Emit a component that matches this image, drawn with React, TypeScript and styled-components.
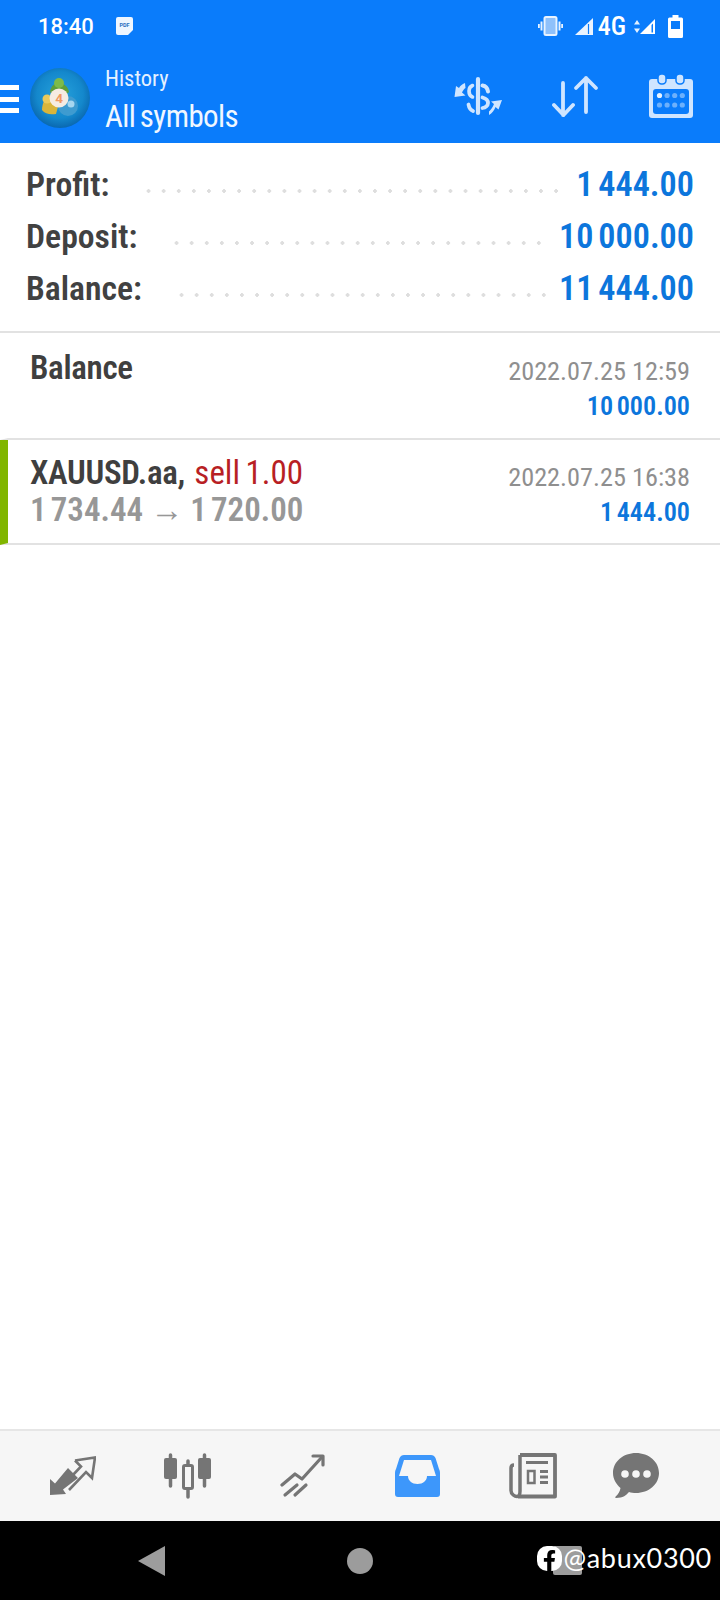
import styled, { createGlobalStyle } from "styled-components";
import { FaFacebookF } from "react-icons/fa";

const GlobalStyle = createGlobalStyle`
  html, body {
    margin: 0;
    padding: 0;
    background: #ffffff;
  }
  body {
    font-family: Roboto, "Liberation Sans", sans-serif;
  }
`;

const Page = styled.div`
  width: 720px;
  height: 1600px;
  display: flex;
  flex-direction: column;
  overflow: hidden;
`;

const Header = styled.header`
  height: 143px;
  background: #0a7cfb;
  color: #fff;
  display: flex;
  flex-direction: column;
`;

const StatusBar = styled.div`
  height: 52px;
  display: flex;
  align-items: center;
  padding: 0 37px 0 38px;
`;

const Clock = styled.span`
  font-size: 22px;
  font-weight: 500;
  margin-right: 22px;
`;

const StatusRight = styled.div`
  margin-left: auto;
  display: flex;
  align-items: center;
`;

const NetLabel = styled.span`
  font-size: 26px;
  line-height: 26px;
  font-weight: 500;
  font-stretch: 75%;
  margin: 0 8px 0 5px;
`;

const Toolbar = styled.div`
  flex: 1;
  display: flex;
  align-items: center;
`;

const Burger = styled.div`
  width: 19px;
  height: 28px;
  margin-top: 3px;
  display: flex;
  flex-direction: column;
  justify-content: space-between;
  span {
    display: block;
    height: 5px;
    background: #fff;
  }
`;

const LogoWrap = styled.div`
  margin: 0 15px 0 11px;
  height: 60px;
`;

const Titles = styled.div`
  display: flex;
  flex-direction: column;
  flex: 1;
  margin-top: 12px;
`;

const Subtitle = styled.span`
  font-size: 22.5px;
  line-height: 27px;
  font-stretch: 75%;
  color: #e4f1ff;
`;

const Title = styled.span`
  font-size: 31px;
  line-height: 50px;
  font-stretch: 75%;
  letter-spacing: -0.6px;
  word-spacing: -2px;
  color: #f0f7ff;
`;

const ToolIcons = styled.div`
  display: flex;
  align-items: center;
  gap: 46px;
  padding: 0 27px 3px 0;
`;

const Summary = styled.section`
  padding: 15px 26px;
  border-bottom: 2px solid #e2e2e2;
  height: 190px;
  box-sizing: border-box;
`;

const SummaryRow = styled.div`
  height: 52px;
  display: flex;
  align-items: center;
  font-weight: 600;
  font-stretch: 75%;
`;

const SummaryLabel = styled.span`
  font-size: 33.7px;
  color: #414141;
`;

const Dots = styled.span`
  flex: 1;
  height: 4px;
  margin: 14px 12px 0 32px;
  background-image: radial-gradient(circle, #dedede 1.7px, transparent 2px);
  background-size: 15.1px 4px;
  background-repeat: repeat-x;
`;

const SummaryValue = styled.span`
  font-size: 34.2px;
  word-spacing: -3px;
  color: #0c76dc;
`;

const DealRow = styled.article<{ $accent?: boolean; $height: number }>`
  height: ${({ $height }) => $height}px;
  box-sizing: border-box;
  border-bottom: 2px solid #e2e2e2;
  border-left: 8px solid ${({ $accent }) => ($accent ? "#80b500" : "transparent")};
  padding: 0 30px 0 22px;
  display: flex;
  justify-content: space-between;
`;

const DealLeft = styled.div<{ $top: number }>`
  display: flex;
  flex-direction: column;
  padding-top: ${({ $top }) => $top}px;
`;

const DealRight = styled.div<{ $top: number }>`
  display: flex;
  flex-direction: column;
  align-items: flex-end;
  padding-top: ${({ $top }) => $top}px;
`;

const DealName = styled.div`
  font-size: 33px;
  line-height: 37px;
  font-weight: 600;
  font-stretch: 75%;
  letter-spacing: -0.3px;
  word-spacing: -2px;
  color: #3f3f3f;
`;

const SellText = styled.span`
  font-weight: 400;
  letter-spacing: 0;
  margin-left: 4px;
  color: #b81f24;
`;

const DealPrices = styled.div`
  font-size: 33px;
  line-height: 37px;
  font-weight: 600;
  font-stretch: 75%;
  word-spacing: -3.5px;
  color: #979797;
`;

const PriceArrow = styled.span`
  margin: 0 3px;
`;

const DealTime = styled.div`
  font-size: 26.3px;
  line-height: 37px;
  font-stretch: 75%;
  color: #8f8f8f;
`;

const DealProfit = styled.div`
  font-size: 26.2px;
  line-height: 33px;
  font-weight: 600;
  font-stretch: 75%;
  word-spacing: -2.5px;
  color: #0c76dc;
`;

const Spacer = styled.div`
  flex: 1;
`;

const BottomNav = styled.nav`
  height: 92px;
  box-sizing: border-box;
  border-top: 2px solid #e6e6e6;
  background: #f6f6f6;
  display: grid;
  grid-template-columns: repeat(5, 115px) 91px;
  padding-left: 15px;
  align-items: center;
  justify-items: center;
`;

const SystemBar = styled.div`
  height: 79px;
  background: #000;
  position: relative;
  display: flex;
  align-items: center;
  gap: 182px;
  padding-left: 138px;
`;

const Watermark = styled.div`
  position: absolute;
  right: 8px;
  top: 22px;
  display: flex;
  align-items: center;
  gap: 1px;
  color: #fff;
  font-family: Lato, sans-serif;
  font-size: 27px;
  line-height: 30px;
  letter-spacing: 0.7px;
`;

const navGrey = "#757575";
const toolBlue = "#cfe5ff";

function Logo() {
  return (
    <svg width="60" height="60" viewBox="0 0 60 60">
      <defs>
        <radialGradient id="lg" cx="50%" cy="45%" r="55%">
          <stop offset="0%" stopColor="#27a2dc" />
          <stop offset="70%" stopColor="#1488cc" />
          <stop offset="100%" stopColor="#0a68b0" />
        </radialGradient>
      </defs>
      <circle cx="30" cy="30" r="30" fill="url(#lg)" />
      <path d="M20 24c1-7 5-9 9-9s9 3 10 9l-10 8z" fill="#5f9f3a" />
      <circle cx="29" cy="15" r="5" fill="#7dbb49" />
      <path d="M12 42c0-7 3-12 8-13l9 6-3 11c-6 1-11 0-14-4z" fill="#d9b53a" />
      <circle cx="17" cy="31" r="4.500" fill="#e9c95a" />
      <circle cx="38" cy="38" r="10" fill="#3e9bd0" />
      <circle cx="41" cy="36" r="3.500" fill="#a6d6ef" />
      <circle cx="29" cy="30" r="9.500" fill="#f6ece2" />
      <text x="29" y="35" fontSize="13.500" fontWeight="700" textAnchor="middle" fill="#f09a62" fontFamily="Roboto">4</text>
    </svg>
  );
}

function PdfBadge() {
  return (
    <svg width="17" height="18" viewBox="0 0 17 18">
      <path d="M2 0h13a2 2 0 0 1 2 2v11l-5 5H2a2 2 0 0 1-2-2V2a2 2 0 0 1 2-2z" fill="#eef6ff" />
      <text x="8.500" y="9.500" fontSize="5.500" fontWeight="700" textAnchor="middle" fill="#2b6fc0" fontFamily="Roboto">PDF</text>
    </svg>
  );
}

function VibrateIcon() {
  return (
    <svg width="25" height="20" viewBox="0 0 25 20">
      <rect x="6.500" y="1" width="12" height="18" rx="1.500" fill="#8fc1fb" stroke="#e8f3ff" strokeWidth="2" />
      <path d="M3.500 5.500v9M0.800 8v4M21.500 5.500v9M24.200 8v4" stroke="#e8f3ff" strokeWidth="2" />
    </svg>
  );
}

function SignalIcon() {
  return (
    <svg width="18" height="17" viewBox="0 0 18 17">
      <path d="M0 17L18 0v17z" fill="#eaf4ff" />
      <path d="M13.500 6v10" stroke="#0a7cfb" strokeWidth="1.200" />
    </svg>
  );
}

function SmallSignalIcon() {
  return (
    <svg width="15" height="15" viewBox="0 0 15 15">
      <path d="M0 15L15 0v15z" fill="#fff" />
      <path d="M11.500 6l1.500-1.500v9h-1.500z" fill="#0a7cfb" />
    </svg>
  );
}

function DataArrows() {
  return (
    <svg width="6" height="13" viewBox="0 0 6 13">
      <path d="M3 0l3 4.500H0zM3 13L0 8.500h6z" fill="#e4f1ff" />
    </svg>
  );
}

const BatteryWrap = styled.span`
  display: flex;
  margin-left: 13px;
`;

function BatteryIcon() {
  return (
    <BatteryWrap>
      <svg width="15" height="23" viewBox="0 0 15 23">
        <path d="M4.500 0h6v2.500h3A1.500 1.500 0 0 1 15 4v17.500a1.500 1.500 0 0 1-1.500 1.500h-12A1.500 1.500 0 0 1 0 21.500V4a1.500 1.500 0 0 1 1.500-1.500h3z" fill="#fff" />
        <rect x="3" y="6" width="9" height="8" fill="#0a7cfb" />
      </svg>
    </BatteryWrap>
  );
}

function CurrencyIcon() {
  return (
    <svg width="55" height="40" viewBox="0 0 55 40" fill="none" stroke={toolBlue} strokeLinecap="round">
      <path d="M28 3v34" strokeWidth="4.200" />
      <path d="M32.500 9.500c3 .5 5 2.500 5.500 6" strokeWidth="4" />
      <path d="M32.500 21.500c3.500 1 5.500 3 5.500 5.500s-2.500 4.500-5.500 5" strokeWidth="3.800" />
      <path d="M22.500 9.500c-2.500 1-3.500 3-3.500 5.500s1 5 3.500 6" strokeWidth="3.600" />
      <path d="M18.500 28.500c.5 3 2 5.500 4.500 6.500" strokeWidth="3.800" />
      <path d="M15 7c-3 1-5 3-6 5l-3-2-1.500 11 11-1.500-3.500-3c.8-1.800 2-3.500 3.500-4.500z" fill={toolBlue} stroke="none" />
      <path d="M39 39c3-1.500 5.500-5 6.500-8l3 2.500L52 24l-11 1.500 3 2.500c-1.200 3-3 5.500-5 7.500z" fill={toolBlue} stroke="none" />
    </svg>
  );
}

function SortIcon() {
  return (
    <svg width="52" height="42" viewBox="0 0 52 42" fill="none" stroke={toolBlue} strokeWidth="3.800" strokeLinecap="round" strokeLinejoin="round">
      <path d="M12 8v32M3 30l9.500 10L22 30" />
      <path d="M35 37V3M25 13L35 3l10 10" />
    </svg>
  );
}

function CalendarIcon() {
  const dots = [0, 1, 2, 3];
  return (
    <svg width="44" height="44" viewBox="0 0 44 44">
      <path d="M3 5h38a3 3 0 0 1 3 3v33a3 3 0 0 1-3 3H3a3 3 0 0 1-3-3V8a3 3 0 0 1 3-3z" fill={toolBlue} />
      <rect x="4" y="15" width="36" height="25" rx="3" fill="#0a7cfb" />
      <rect x="9" y="0" width="8" height="10" rx="3.500" fill={toolBlue} stroke="#0a7cfb" strokeWidth="1.500" />
      <rect x="27" y="0" width="8" height="10" rx="3.500" fill={toolBlue} stroke="#0a7cfb" strokeWidth="1.500" />
      {dots.map((i) => (
        <circle key={`a${i}`} cx={10.5 + i * 7.6} cy="21.500" r="2.600" fill={i === 0 ? "#eaf4ff" : "#6db0fb"} />
      ))}
      {dots.map((i) => (
        <circle key={`b${i}`} cx={10.5 + i * 7.6} cy="31" r="2.600" fill="#6db0fb" />
      ))}
    </svg>
  );
}

function TradeIcon() {
  return (
    <svg width="46" height="40" viewBox="0 0 46 40">
      <path d="M0 39V23l5 4.500L18 12l10 10-15 11.500 3 4.500z" fill={navGrey} />
      <path d="M25 4.500L45 1.500 42 22l-6-6-17 18M25 4.500l6 6-9.500 10" fill="none" stroke={navGrey} strokeWidth="2.600" />
    </svg>
  );
}

function CandlesIcon() {
  return (
    <svg width="49" height="46" viewBox="0 0 49 46" fill="none" stroke={navGrey} strokeWidth="3.500" strokeLinecap="round">
      <path d="M7.500 2v31M41.500 2v31M25 8v36" />
      <rect x="1" y="5" width="13" height="21" rx="2" fill={navGrey} stroke="none" />
      <rect x="35" y="5" width="13" height="21" rx="2" fill={navGrey} stroke="none" />
      <rect x="20.500" y="12.500" width="9" height="23" rx="1.500" fill="#f6f6f6" strokeWidth="3" />
    </svg>
  );
}

function ChartIcon() {
  return (
    <svg width="46" height="44" viewBox="0 0 46 44" fill="none" stroke={navGrey} strokeWidth="3.200" strokeLinecap="round" strokeLinejoin="round">
      <path d="M2 31l13-11 7 5L42 3" />
      <path d="M33 2h10v9" />
      <path d="M5 41l12-10M15 41l11-10" />
    </svg>
  );
}

function InboxIcon() {
  return (
    <svg width="45" height="42" viewBox="0 0 45 42">
      <path d="M9 0h27c2 0 3.500 1 4.500 3L44 14c1 2 1 3 1 5v20c0 2-1 3-3 3H3c-2 0-3-1-3-3V19c0-2 0-3 1-5L4.500 3C5.500 1 7 0 9 0z" fill="#3d97fb" />
      <path d="M9 5h27l5 16h-9c0 4.500-4 8-9.500 8S13 25.500 13 21H4z" fill="#f6f6f6" />
    </svg>
  );
}

function NewsIcon() {
  return (
    <svg width="48" height="46" viewBox="0 0 48 46" fill="none" stroke={navGrey}>
      <path d="M11 2h35v41.500H9" strokeWidth="3.800" strokeLinejoin="round" />
      <path d="M11 2v36c0 3-1 5.500-3 5.500s-6-2-6-6V15c0-2 1-3 3-3" strokeWidth="3.500" />
      <path d="M17 9.500h22" strokeWidth="3" />
      <rect x="19" y="18" width="6.500" height="12" strokeWidth="2.500" fill="#f6f6f6" />
      <path d="M31 18.500h8M31 24h8M31 29.500h8" strokeWidth="2.800" />
    </svg>
  );
}

function ChatIcon() {
  return (
    <svg width="46" height="46" viewBox="0 0 46 46">
      <path d="M23 0c12.700 0 23 8.700 23 20S35.700 40 23 40c-2.500 0-5-.3-7-1-2.500 3-6 6-13 6-1 0-1-1-.3-1.500 2.500-2 4.300-5 4.800-8.500C3 31 0 26 0 20 0 8.700 10.300 0 23 0z" fill={navGrey} />
      <circle cx="12" cy="21" r="3.800" fill="#f6f6f6" />
      <circle cx="23" cy="21" r="3.800" fill="#f6f6f6" />
      <circle cx="34" cy="21" r="3.800" fill="#f6f6f6" />
    </svg>
  );
}

const BackButton = styled.div`
  width: 0;
  height: 0;
  border-top: 15px solid transparent;
  border-bottom: 15px solid transparent;
  border-right: 27px solid #9c9c9c;
`;

const HomeButton = styled.div`
  width: 26px;
  height: 26px;
  border-radius: 50%;
  background: #9c9c9c;
`;

const RecentButton = styled.div`
  position: absolute;
  left: 553px;
  top: 25px;
  width: 29px;
  height: 29px;
  background: #9c9c9c;
  border-radius: 2px;
`;

const FbBadge = styled.span`
  width: 25px;
  height: 25px;
  border-radius: 10px;
  background: #fff;
  color: #000;
  display: flex;
  align-items: flex-end;
  justify-content: center;
  font-size: 21px;
`;

const VibrateGap = styled.span`
  width: 12px;
`;

const summary = [
  { label: "Profit:", value: "1 444.00" },
  { label: "Deposit:", value: "10 000.00" },
  { label: "Balance:", value: "11 444.00" },
];

export default function App() {
  return (
    <Page>
      <GlobalStyle />
      <Header>
        <StatusBar>
          <Clock>18:40</Clock>
          <PdfBadge />
          <StatusRight>
            <VibrateIcon />
            <VibrateGap />
            <SignalIcon />
            <NetLabel>4G</NetLabel>
            <DataArrows />
            <SmallSignalIcon />
            <BatteryIcon />
          </StatusRight>
        </StatusBar>
        <Toolbar>
          <Burger>
            <span />
            <span />
            <span />
          </Burger>
          <LogoWrap>
            <Logo />
          </LogoWrap>
          <Titles>
            <Subtitle>History</Subtitle>
            <Title>All symbols</Title>
          </Titles>
          <ToolIcons>
            <CurrencyIcon />
            <SortIcon />
            <CalendarIcon />
          </ToolIcons>
        </Toolbar>
      </Header>
      <Summary>
        {summary.map((row) => (
          <SummaryRow key={row.label}>
            <SummaryLabel>{row.label}</SummaryLabel>
            <Dots />
            <SummaryValue>{row.value}</SummaryValue>
          </SummaryRow>
        ))}
      </Summary>
      <DealRow $height={107}>
        <DealLeft $top={16}>
          <DealName>Balance</DealName>
        </DealLeft>
        <DealRight $top={20}>
          <DealTime>2022.07.25 12:59</DealTime>
          <DealProfit>10 000.00</DealProfit>
        </DealRight>
      </DealRow>
      <DealRow $accent $height={105}>
        <DealLeft $top={14}>
          <DealName>
            XAUUSD.aa, <SellText>sell 1.00</SellText>
          </DealName>
          <DealPrices>
            1 734.44 <PriceArrow>→</PriceArrow> 1 720.00
          </DealPrices>
        </DealLeft>
        <DealRight $top={19}>
          <DealTime>2022.07.25 16:38</DealTime>
          <DealProfit>1 444.00</DealProfit>
        </DealRight>
      </DealRow>
      <Spacer />
      <BottomNav>
        <TradeIcon />
        <CandlesIcon />
        <ChartIcon />
        <InboxIcon />
        <NewsIcon />
        <ChatIcon />
      </BottomNav>
      <SystemBar>
        <BackButton />
        <HomeButton />
        <RecentButton />
        <Watermark>
          <FbBadge>
            <FaFacebookF />
          </FbBadge>
          @abux0300
        </Watermark>
      </SystemBar>
    </Page>
  );
}
